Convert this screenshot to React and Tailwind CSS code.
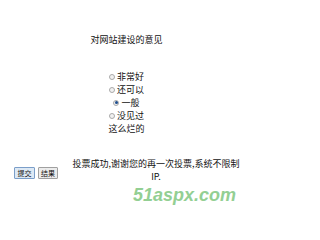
import React from "react";

const options = [
  { label: "非常好", checked: false },
  { label: "还可以", checked: false },
  { label: "一般", checked: true },
  { label: "没见过", checked: false },
];

const Radio = ({ checked }) => (
  <span className="inline-flex h-[6px] w-[6px] items-center justify-center rounded-full border border-[#a9a9a9] bg-[#f1f1f1]">
    {checked && <span className="h-[3px] w-[3px] rounded-full bg-[#1f4f8f]" />}
  </span>
);

export default function App() {
  return (
    <div
      className="relative h-[222px] w-[247px] overflow-hidden bg-white text-[9px] leading-[13px] text-[#111]"
      style={{ fontFamily: '"Noto Sans CJK SC", "Liberation Sans", sans-serif' }}
    >
      <div className="flex flex-col items-center pl-[6px] pt-[33px]">
        <div>对网站建设的意见</div>
        <div className="mt-[24px] flex flex-col items-center">
          {options.map((o) => (
            <div key={o.label} className="flex items-center gap-[2px]">
              <Radio checked={o.checked} />
              <span>{o.label}</span>
            </div>
          ))}
          <div>这么烂的</div>
        </div>
      </div>

      <div className="mt-[22px] flex items-start">
        <div className="ml-[14px] mt-[10px] flex gap-[3px]">
          <button className="h-[12px] w-[21px] rounded-[1px] border border-[#7b9ec9] bg-[#dde9f5] text-[7px] leading-[10px]">
            提交
          </button>
          <button className="h-[12px] w-[20px] rounded-[1px] border border-[#a0a0a0] bg-[#ececec] text-[7px] leading-[10px]">
            结果
          </button>
        </div>
        <div className="ml-[10px] w-[176px] text-center">
          投票成功,谢谢您的再一次投票,系统不限制IP.
        </div>
      </div>

      <div
        className="absolute left-[133px] top-[184px] text-[18px] font-bold italic leading-[22px] text-[#93cf93]"
        style={{ fontFamily: '"Liberation Sans", Arial, sans-serif' }}
      >
        51aspx.com
      </div>
    </div>
  );
}
